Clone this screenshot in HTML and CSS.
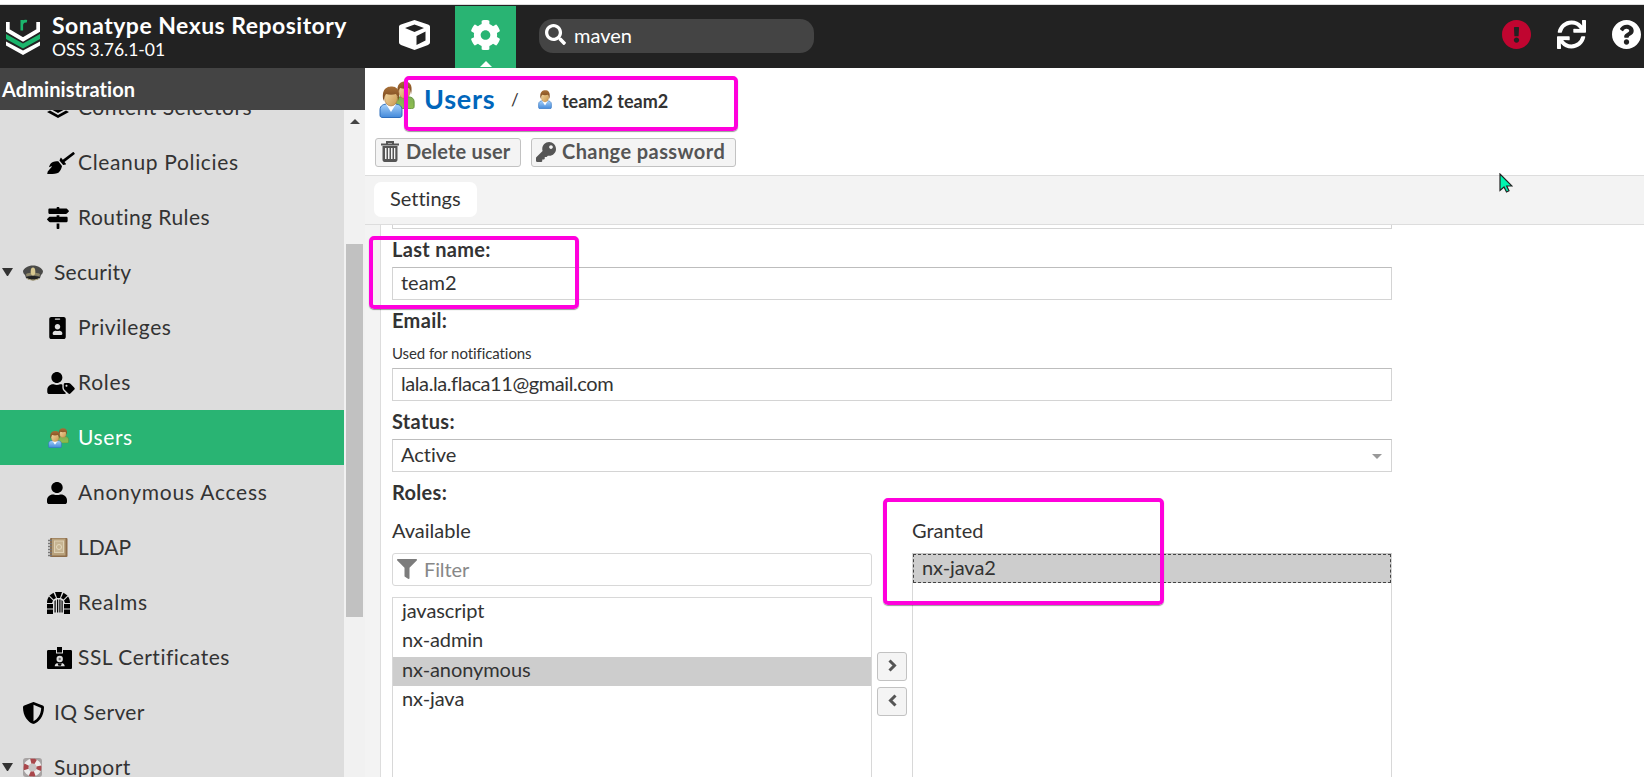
FILE: index.html
```
<!DOCTYPE html>
<html lang="en">
<head>
<meta charset="utf-8">
<title>Sonatype Nexus Repository</title>
<link rel="stylesheet" href="styles.css">
</head>
<body>
<svg class="defs" aria-hidden="true">
  <defs>
    <linearGradient id="blue" x1="0" y1="0" x2="0" y2="1"><stop offset="0" stop-color="#a8d2fa"/><stop offset="1" stop-color="#4389da"/></linearGradient>
    <linearGradient id="green" x1="0" y1="0" x2="0" y2="1"><stop offset="0" stop-color="#7fae55"/><stop offset="1" stop-color="#8fc04f"/></linearGradient>
    <linearGradient id="skin" x1="0" y1="0" x2="1" y2="1"><stop offset="0" stop-color="#f5dba8"/><stop offset="1" stop-color="#c9964c"/></linearGradient>
    <linearGradient id="hair" x1="0" y1="0" x2="0" y2="1"><stop offset="0" stop-color="#a87038"/><stop offset="1" stop-color="#74431a"/></linearGradient>
    <symbol id="person-blue" viewBox="0 0 24 32">
      <path d="M1 29v-5c0-5 4-6 8-6h6c4 0 8 1 8 6v5c0 2-1 2.500-3 2.500H4c-2 0-3-.5-3-2.500z" fill="url(#blue)" stroke="#2f6fbd"/>
      <path d="M7 18l5 8 5-8z" fill="#fff"/>
      <ellipse cx="12" cy="12" rx="6.500" ry="8" fill="url(#skin)" stroke="#a8743a" stroke-width=".6"/>
      <path d="M4.500 15C2 3 8 .5 12.500.5S22 3 19.500 15c-.5-3-1-5.500-2.500-7-3 1-7 1-10 0-1.500 2-2 4-2.500 7z" fill="url(#hair)"/>
    </symbol>
    <symbol id="person-green" viewBox="0 0 24 32">
      <path d="M1 29v-5c0-5 4-6 8-6h6c4 0 8 1 8 6v5c0 2-1 2.500-3 2.500H4c-2 0-3-.5-3-2.500z" fill="url(#green)" stroke="#5d8a38"/>
      <ellipse cx="12" cy="12" rx="6.500" ry="8" fill="url(#skin)" stroke="#a8743a" stroke-width=".6"/>
      <path d="M4.500 15C2 3 8 .5 12.500.5S22 3 19.500 15c-.5-3-1-5.500-2.500-7-3 1-7 1-10 0-1.500 2-2 4-2.500 7z" fill="url(#hair)"/>
    </symbol>
    <symbol id="people" viewBox="0 0 36 37">
      <use href="#person-green" x="15" y="0" width="21" height="28"/>
      <use href="#person-blue" x="0" y="5" width="24" height="32"/>
    </symbol>
  </defs>
</svg>

<header class="header">
  <svg class="logo" viewBox="0 0 34 36">
    <path d="M1.800 3v8.500L17 20.500l15.200-9V3" fill="none" stroke="#fff" stroke-width="3.800"/>
    <path d="M0 15l17 9.500L34 15v5L17 29.500 0 20z" fill="#1bb56c"/>
    <path d="M0 22.500l17 9 17-9v4L17 36 0 26.500z" fill="#fff"/>
    <path d="M15.800 11.500V1M15.800 5.500C16.300 3 18 1.700 21 2.200" fill="none" stroke="#1bb56c" stroke-width="2.600"/>
  </svg>
  <div class="brand">
    <div class="brand-name"><span>Sonatype Nexus Repository</span></div>
    <div class="brand-version"><span>OSS 3.76.1-01</span></div>
  </div>
  <div class="mode">
    <svg class="cube" viewBox="0 0 31 30"><path d="M15.500 0L29 4.500c1.500.5 2 1 2 2.500v15c0 1.500-.5 2-2 3L15.500 30 2 25c-1.500-1-2-1.500-2-3V7c0-1.500.5-2 2-2.500zM6 8l9.500 4L25 8l-9.500-3.500zM17.500 16v9l9-4.500v-9z" fill="#fff" fill-rule="evenodd"/></svg>
  </div>
  <div class="mode active">
    <svg class="gear" viewBox="16 8 480 496"><path fill="#fff" fill-rule="evenodd" d="M487.400 315.700l-42.600-24.600c4.300-23.200 4.300-47 0-70.200l42.600-24.600c4.900-2.800 7.100-8.600 5.500-14-11.100-35.600-30-67.800-54.700-94.600-3.800-4.100-10-5.100-14.800-2.300L380.800 110c-17.900-15.400-38.500-27.300-60.800-35.100V25.800c0-5.600-3.900-10.500-9.400-11.700-36.700-8.200-74.300-7.800-109.200 0-5.500 1.200-9.400 6.100-9.400 11.700V75c-22.200 7.900-42.800 19.800-60.800 35.100L88.700 85.500c-4.900-2.800-11-1.900-14.800 2.300-24.700 26.700-43.600 58.900-54.700 94.600-1.700 5.400.6 11.200 5.500 14L67.300 221c-4.300 23.200-4.300 47 0 70.200l-42.600 24.600c-4.900 2.800-7.100 8.600-5.500 14 11.100 35.600 30 67.800 54.700 94.600 3.800 4.100 10 5.100 14.800 2.300l42.600-24.600c17.900 15.400 38.500 27.300 60.800 35.100v49.200c0 5.600 3.900 10.500 9.400 11.700 36.700 8.200 74.300 7.800 109.200 0 5.500-1.200 9.400-6.100 9.400-11.700v-49.200c22.200-7.900 42.800-19.800 60.800-35.100l42.600 24.600c4.900 2.800 11 1.900 14.800-2.300 24.700-26.700 43.600-58.900 54.700-94.600 1.500-5.500-.7-11.300-5.600-14.100zM256 336c-44.100 0-80-35.900-80-80s35.900-80 80-80 80 35.900 80 80-35.900 80-80 80z"/></svg>
    <i class="notch"></i>
  </div>
  <div class="search">
    <svg viewBox="0 0 512 512"><path fill="#fff" fill-rule="evenodd" d="M505 442.700L405.300 343c-4.500-4.500-10.600-7-17-7H372c27.600-35.300 44-79.700 44-128C416 93.100 322.900 0 208 0S0 93.100 0 208s93.100 208 208 208c48.300 0 92.700-16.400 128-44v16.300c0 6.400 2.500 12.500 7 17l99.700 99.700c9.400 9.400 24.600 9.400 33.900 0l28.300-28.300c9.400-9.400 9.400-24.600.1-34zM208 336c-70.700 0-128-57.200-128-128 0-70.700 57.200-128 128-128 70.700 0 128 57.200 128 128 0 70.700-57.200 128-128 128z"/></svg>
    <span>maven</span>
  </div>
  <div class="actions">
    <svg viewBox="8 8 496 496"><path fill="#c00530" fill-rule="evenodd" d="M504 256c0 136.997-111.043 248-248 248S8 392.997 8 256C8 119.083 119.043 8 256 8s248 111.083 248 248zm-248 50c-25.405 0-46 20.595-46 46s20.595 46 46 46 46-20.595 46-46-20.595-46-46-46zm-43.673-165.346l7.418 136c.347 6.364 5.609 11.346 11.982 11.346h48.546c6.373 0 11.635-4.982 11.982-11.346l7.418-136c.375-6.874-5.098-12.654-11.982-12.654h-63.383c-6.884 0-12.356 5.780-11.981 12.654z"/></svg>
    <svg viewBox="0 0 512 512"><path fill="#fff" d="M440.650 12.570l4 82.770A247.160 247.160 0 0 0 255.830 8C134.730 8 33.910 94.920 12.290 209.820A12 12 0 0 0 24.090 224h49.050a12 12 0 0 0 11.670-9.260 175.910 175.910 0 0 1 317-56.940l-101.460-4.860a12 12 0 0 0-12.570 12v47.410a12 12 0 0 0 12 12H500a12 12 0 0 0 12-12V12a12 12 0 0 0-12-12h-47.370a12 12 0 0 0-11.980 12.570zM255.830 432a175.610 175.610 0 0 1-146-77.800l101.800 4.870a12 12 0 0 0 12.570-12v-47.400a12 12 0 0 0-12-12H12a12 12 0 0 0-12 12V500a12 12 0 0 0 12 12h47.350a12 12 0 0 0 12-12.600l-4.150-82.570A247.170 247.170 0 0 0 255.830 504c121.110 0 221.930-86.920 243.550-201.820a12 12 0 0 0-11.800-14.180h-49.050a12 12 0 0 0-11.670 9.260A175.860 175.860 0 0 1 255.830 432z"/></svg>
    <svg viewBox="8 8 496 496"><path fill="#fff" fill-rule="evenodd" d="M504 256c0 136.997-111.043 248-248 248S8 392.997 8 256C8 119.083 119.043 8 256 8s248 111.083 248 248zM262.655 90c-54.497 0-89.255 22.957-116.549 63.758-3.536 5.286-2.353 12.415 2.715 16.258l34.699 26.310c5.205 3.947 12.621 3.008 16.665-2.122 17.864-22.658 30.113-35.797 57.303-35.797 20.429 0 45.698 13.148 45.698 32.958 0 14.976-12.363 22.667-32.534 33.976C247.128 238.528 216 254.941 216 296v4c0 6.627 5.373 12 12 12h56c6.627 0 12-5.373 12-12v-1.333c0-28.462 83.186-29.647 83.186-106.667 0-58.002-60.165-102-116.531-102zM256 338c-25.365 0-46 20.635-46 46 0 25.364 20.635 46 46 46s46-20.636 46-46c0-25.365-20.635-46-46-46z"/></svg>
  </div>
</header>

<div class="layout">
  <aside class="side">
    <div class="side-title"><span>Administration</span></div>
    <div class="side-body">
      <nav class="tree">
        <div class="row sub"><div class="ico"><svg width="22" height="22" viewBox="0 0 22 22"><path d="M0 3l11-3 11 3-11 6zM0 10l3-1.500 8 4.500 8-4.500 3 1.500-11 6zM0 15l3-1.500 8 4.500 8-4.500 3 1.500-11 6z"/></svg></div><span class="t-content">Content Selectors</span></div>
        <div class="row sub"><div class="ico"><svg width="28" height="22" viewBox="0 0 640 512"><path d="M256.470 216.770l86.730 109.180s-16.600 102.360-76.570 150.120C206.660 523.850 0 510.190 0 510.190s3.800-23.140 11-55.430l94.620-112.170c3.970-4.700-.87-11.620-6.650-9.500l-60.400 22.090c14.440-41.660 32.720-80.040 54.600-97.470 59.970-47.760 163.300-40.940 163.300-40.940zM636.530 31.030l-19.860-25c-5.490-6.900-15.520-8.050-22.410-2.560l-232.480 177.800-34.140-42.970c-5.090-6.410-15.140-5.210-18.590 2.210l-25.330 54.550 86.730 109.180 58.800-12.450c8-1.690 11.420-11.200 6.340-17.600l-34.090-42.920 232.480-177.800c6.890-5.480 8.040-15.530 2.550-22.440z"/></svg></div><span class="t-cleanup">Cleanup Policies</span></div>
        <div class="row sub"><div class="ico"><svg width="22" height="22" viewBox="0 0 512 512"><path d="M507.310 84.690L464 41.370c-6-6-14.140-9.370-22.630-9.370H288V16c0-8.840-7.160-16-16-16h-32c-8.840 0-16 7.160-16 16v16H56c-13.250 0-24 10.750-24 24v80c0 13.250 10.750 24 24 24h385.370c8.490 0 16.620-3.370 22.630-9.370l43.310-43.310c6.250-6.260 6.250-16.380 0-22.630zM224 496c0 8.840 7.160 16 16 16h32c8.840 0 16-7.160 16-16V384h-64v112zm232-272H288v-32h-64v32H70.630c-8.490 0-16.620 3.370-22.630 9.370L4.690 276.690c-6.250 6.250-6.250 16.380 0 22.630L48 342.630c6 6 14.140 9.370 22.630 9.370H456c13.250 0 24-10.750 24-24v-80c0-13.250-10.750-24-24-24z"/></svg></div><span class="t-routing">Routing Rules</span></div>
        <div class="row top"><i class="caret"></i><div class="ico"><svg width="20" height="16" viewBox="0 0 20 16"><path d="M0 6c1-3 5-5.500 10-5.500S19 3 20 6c0 2-1 3-2 4l-1 3c-4 3-10 3-14 0l-1-3C1 9 0 8 0 6z" fill="#4a4a48"/><path d="M3 9c4-2 10-2 14 0l-.5 2.500c-4-1.500-9-1.500-13 0z" fill="#8d8668"/><path d="M3 12.500c4-2 10-2 14 0-4 3.500-10 3.500-14 0z" fill="#222"/><path d="M4 13.500c4 2 8 2 12 0" fill="none" stroke="#b9ae84"/><ellipse cx="10" cy="6.500" rx="2.300" ry="4" fill="#d8c88f"/></svg></div><span class="t-security">Security</span></div>
        <div class="row sub"><div class="ico"><svg class="nudge" width="17" height="22" viewBox="0 0 384 512"><path fill-rule="evenodd" d="M336 0H48C21.500 0 0 21.500 0 48v416c0 26.500 21.500 48 48 48h288c26.500 0 48-21.500 48-48V48c0-26.500-21.500-48-48-48zM144 32h96c8.800 0 16 7.200 16 16s-7.200 16-16 16h-96c-8.800 0-16-7.200-16-16s7.200-16 16-16zm48 128c35.300 0 64 28.700 64 64s-28.700 64-64 64-64-28.700-64-64 28.700-64 64-64zm112 236.800c0 10.600-10 19.200-22.400 19.200H102.400C90 416 80 407.400 80 396.800v-19.200c0-31.800 30.100-57.600 67.200-57.600h5c12.300 5.100 25.700 8 39.800 8s27.600-2.900 39.800-8h5c37.100 0 67.200 25.800 67.200 57.600v19.200z"/></svg></div><span class="t-priv">Privileges</span></div>
        <div class="row sub"><div class="ico"><svg width="28" height="22" viewBox="0 0 640 512"><path fill-rule="evenodd" d="M630.600 364.900l-90.300-90.200c-12-12-28.300-18.700-45.300-18.700h-79.300c-17.700 0-32 14.300-32 32v79.200c0 17 6.700 33.200 18.700 45.200l90.300 90.200c12.500 12.500 32.800 12.500 45.300 0l92.500-92.500c12.600-12.500 12.600-32.700.1-45.200zm-182.800-21c-13.300 0-24-10.700-24-24s10.700-24 24-24 24 10.700 24 24c0 13.200-10.700 24-24 24zm-223.800-88c70.700 0 128-57.300 128-128C352 57.300 294.700 0 224 0S96 57.300 96 128c0 70.600 57.300 127.900 128 127.900zm127.800 111.200V294c-12.200-3.600-24.900-6.200-38.200-6.200h-16.700c-22.200 10.200-46.900 16-72.900 16s-50.600-5.800-72.900-16h-16.700C60.200 287.900 0 348.100 0 422.300v41.600c0 26.500 21.500 48 48 48h352c15.500 0 29.100-7.500 37.900-18.900l-58-58c-18.100-18.100-28.100-42.200-28.100-67.900z"/></svg></div><span class="t-roles">Roles</span></div>
        <div class="row sub selected"><div class="ico"><svg class="small-people" width="21" height="20" viewBox="0 0 36 37" preserveAspectRatio="none"><use href="#people" width="36" height="37"/></svg></div><span class="t-users">Users</span></div>
        <div class="row sub"><div class="ico"><svg width="20" height="22" viewBox="0 0 448 512" preserveAspectRatio="none"><path d="M224 256c70.700 0 128-57.300 128-128S294.700 0 224 0 96 57.300 96 128s57.300 128 128 128zm89.600 32h-16.700c-22.200 10.200-46.900 16-72.900 16s-50.600-5.800-72.900-16h-16.700C60.200 288 0 348.200 0 422.400V464c0 26.500 21.500 48 48 48h352c26.500 0 48-21.500 48-48v-41.600c0-74.200-60.200-134.400-134.400-134.400z"/></svg></div><span class="t-anon">Anonymous Access</span></div>
        <div class="row sub"><div class="ico"><svg width="21" height="21" viewBox="0 0 21 21"><rect x="3" y="1" width="17.500" height="19" rx="1" fill="#8d6d4a"/><rect x="5" y="1.500" width="13.500" height="17" fill="#b9a27c"/><rect x="7.500" y="4" width="9" height="11.500" fill="#c6b492" stroke="#ddd0b4"/><circle cx="12" cy="10" r="2.500" fill="none" stroke="#e5dabf"/><path d="M1 3.500h4M1 6.500h4M1 9.500h4M1 12.500h4M1 15.500h4M1 18.500h4" stroke="#777" stroke-width="1.300"/></svg></div><span>LDAP</span></div>
        <div class="row sub"><div class="ico"><svg width="23" height="22" viewBox="0 0 23 22"><path d="M8 0h7l-2 6h-3zM6.500.8L9 6 6.500 7.500 2.500 3.500zM16.500.8L14 6l2.500 1.500 4-4zM2 4.500l4 4L5 11H0c0-3 .8-5 2-6.500zM21 4.500l-4 4 1 2.500h5c0-3-.8-5-2-6.500zM0 12h6v4.500H0zM17 12h6v4.500h-6zM0 17.500h6V22H0zM17 17.500h6V22h-6zM7.500 9l1.200-1v12.500H7.500zM10 7.500h1.200v13H10zM12.300 7.500h1.200v13h-1.200zM14.500 8l1.200 1v11.500h-1.200z"/></svg></div><span class="t-realms">Realms</span></div>
        <div class="row sub"><div class="ico"><svg width="25" height="22" viewBox="0 0 25 22"><path d="M1.500 3H9v3.500h7V3h7.500C24.500 3 25 3.500 25 4.500v16c0 1-.5 1.500-1.500 1.500h-22C.5 22 0 21.500 0 20.500v-16C0 3.500.5 3 1.500 3z"/><path d="M10 0h5v5.500h-5z"/><circle cx="12.700" cy="12" r="3.200" fill="#ddd"/><path d="M7.700 19.300c0-2 1.300-3 3.500-3.300h3c2.200.3 3.500 1.300 3.500 3.300z" fill="#ddd"/><path d="M10.500 16.200l1 2.600h2.400l1-2.600z"/><circle cx="12.700" cy="12" r="1.200" fill="#777"/></svg></div><span class="t-ssl">SSL Certificates</span></div>
        <div class="row top"><i class="caret none"></i><div class="ico"><svg width="21" height="22" viewBox="16 0 480 512" preserveAspectRatio="none"><path fill-rule="evenodd" d="M466.500 83.700l-192-80a48.150 48.150 0 0 0-36.900 0l-192 80C27.700 91.100 16 108.600 16 128c0 198.500 114.500 335.700 221.500 380.300 11.800 4.900 25.100 4.900 36.900 0C360.100 472.600 496 349.300 496 128c0-19.400-11.700-36.900-29.500-44.300zM256.100 446.300l-.1-381 175.900 73.300c-3.300 151.400-82.100 261.100-175.800 307.700z"/></svg></div><span class="t-iq">IQ Server</span></div>
        <div class="row top"><i class="caret"></i><div class="ico"><svg width="19" height="19" viewBox="0 0 19 19"><rect width="19" height="19" rx="3" fill="#a7a3a3"/><circle cx="9.500" cy="9.500" r="6.500" fill="#c8c4c4" stroke="#ececec" stroke-width="5"/><circle cx="9.500" cy="9.500" r="6.500" fill="none" stroke="#a9474b" stroke-width="5" stroke-dasharray="5.100 5.110" stroke-dashoffset="2.550"/></svg></div><span class="t-support">Support</span></div>
      </nav>
      <div class="scrollbar"><i class="scroll-up"></i><i class="scroll-thumb"></i></div>
    </div>
  </aside>

  <main class="main">
    <div class="crumbs">
      <svg class="people" viewBox="0 0 36 37"><use href="#people" width="36" height="37"/></svg>
      <span class="crumb-root">Users</span>
      <span class="crumb-sep">/</span>
      <svg class="person" viewBox="0 0 24 32" preserveAspectRatio="none"><use href="#person-blue" width="24" height="32"/></svg>
      <span class="crumb-leaf">team2 team2</span>
    </div>
    <div class="toolbar">
      <div class="btn delete"><svg width="18" height="21" viewBox="0 0 18 21"><path fill="none" stroke="#555" stroke-width="2" d="M0 3.500h18M6 2.800V1h6v1.800"/><path fill="#555" fill-rule="evenodd" d="M1.500 5h15v13.500c0 1.500-.8 2.500-2 2.500h-11c-1.200 0-2-1-2-2.500zM4 7v11h1.500V7zm3 0v11h1.500V7zm3 0v11h1.500V7zm3 0v11h1.300V7z"/></svg><span>Delete user</span></div>
      <div class="btn change"><svg width="20" height="20" viewBox="0 0 512 512"><path fill="#555" fill-rule="evenodd" d="M512 176.001C512 273.203 433.202 352 336 352c-11.220 0-22.190-1.062-32.827-3.069l-24.012 27.014A23.999 23.999 0 0 1 261.223 384H224v40c0 13.255-10.745 24-24 24h-40v40c0 13.255-10.745 24-24 24H24c-13.255 0-24-10.745-24-24v-78.059c0-6.365 2.529-12.470 7.029-16.971l161.802-161.802C163.108 213.814 160 195.271 160 176 160 78.798 238.797.001 335.999 0 433.488-.001 512 78.511 512 176.001zM336 128c0 26.510 21.490 48 48 48s48-21.490 48-48-21.490-48-48-48-48 21.490-48 48z"/></svg><span>Change password</span></div>
    </div>
    <div class="tabs"><div class="tab"><span>Settings</span></div></div>
    <div class="content">
      <div class="form">
        <div class="field cut"></div>
        <div class="label"><span>Last name:</span></div>
        <div class="field"><span>team2</span></div>
        <div class="label"><span>Email:</span></div>
        <div class="hint"><span>Used for notifications</span></div>
        <div class="field"><span class="mail">lala.la.flaca11@gmail.com</span></div>
        <div class="label"><span>Status:</span></div>
        <div class="field select"><span>Active</span><i class="down"></i></div>
        <div class="label"><span>Roles:</span></div>
        <div class="picker">
          <div class="column">
            <div class="caption"><span>Available</span></div>
            <div class="filter"><svg width="20" height="20" viewBox="0 0 512 512"><path fill="#7c7c7c" d="M487.976 0H24.028C2.710 0-8.047 25.866 7.058 40.971L192 225.941V432c0 7.831 3.821 15.170 10.237 19.662l80 55.980C298.020 518.690 320 507.493 320 487.980V225.941l184.947-184.970C520.021 25.896 509.338 0 487.976 0z"/></svg><span>Filter</span></div>
            <div class="list">
              <div class="item"><span>javascript</span></div>
              <div class="item"><span>nx-admin</span></div>
              <div class="item chosen"><span>nx-anonymous</span></div>
              <div class="item"><span>nx-java</span></div>
            </div>
          </div>
          <div class="movers">
            <div class="mover"><svg width="9" height="13" viewBox="0 0 9 13"><path d="M1.500 1.500l5 5-5 5" fill="none" stroke="#555" stroke-width="3"/></svg></div>
            <div class="mover"><svg width="9" height="13" viewBox="0 0 9 13"><path d="M7.500 1.500l-5 5 5 5" fill="none" stroke="#555" stroke-width="3"/></svg></div>
          </div>
          <div class="column">
            <div class="caption"><span>Granted</span></div>
            <div class="list granted"><div class="item focus"><span>nx-java2</span></div></div>
          </div>
        </div>
      </div>
    </div>
  </main>
</div>

<div class="mark mark-title"></div>
<div class="mark mark-name"></div>
<div class="mark mark-granted"></div>
<svg class="cursor" viewBox="0 0 14 20"><path d="M1 1v16.500l4-3.500 2.500 5 2.500-1.200-2.300-4.800H13z" fill="#00f5b0" stroke="#222" stroke-width="1.200"/></svg>
</body>
</html>
```
FILE: styles.css
```
* { box-sizing: border-box; }
html, body { height: 777px; overflow: hidden; }
body {
  margin: 0;
  position: relative;
  background: #fff;
  color: #333;
  font-family: Lato, "Open Sans", sans-serif;
  font-size: 20px;
  font-variant-ligatures: none;
  display: flex;
  flex-direction: column;
}
span { white-space: nowrap; }
svg { display: block; flex: none; }
.defs { position: absolute; width: 0; height: 0; }

.header {
  flex: none;
  height: 64px;
  margin-top: 4px;
  border-top: 1px solid #ddd;
  background: #222;
  color: #fff;
  display: flex;
  align-items: flex-start;
}
.logo { width: 34px; height: 36px; margin: 14px 0 0 6px; }
.brand { width: 334px; padding: 5px 0 0 12px; }
.brand-name { font-weight: 700; font-size: 23px; line-height: 30px; letter-spacing: .48px; }
.brand-version { font-size: 17.500px; line-height: 20px; }
.mode { width: 81px; height: 63px; }
.cube { width: 31px; height: 30px; margin: 15px 0 0 25px; }
.mode.active {
  width: 61px;
  height: 62px;
  margin-top: 1px;
  background: #29b473;
  display: flex;
  flex-direction: column;
  align-items: center;
}
.gear { width: 29px; height: 30px; margin-top: 14px; }
.notch {
  border: 6px solid transparent;
  border-top: 0;
  border-bottom-color: #fff;
  margin-top: 11px;
}
.search {
  width: 275px;
  height: 34px;
  margin: 14px 0 0 23px;
  border-radius: 14px;
  background: #444;
  display: flex;
  align-items: center;
  gap: 8px;
  padding-left: 6px;
}
.search svg { width: 21px; height: 21px; margin-bottom: 4px; }
.search span { line-height: 30px; margin-bottom: 3px; }
.actions { margin-left: auto; display: flex; gap: 26px; padding: 15px 3px 0 0; }
.actions svg { width: 29px; height: 29px; }

.layout { flex: 1; min-height: 0; display: flex; }
.side { width: 365px; flex: none; display: flex; flex-direction: column; }
.side-title {
  flex: none;
  height: 42px;
  background: #444;
  color: #fff;
  font-weight: 700;
  line-height: 42px;
  padding-left: 2px;
  letter-spacing: .08px;
}
.side-body { flex: 1; min-height: 0; display: flex; }
.tree {
  width: 344px;
  background: #ddd;
  overflow: hidden;
  display: flex;
  flex-direction: column;
}
.row { flex: none; height: 55px; display: flex; align-items: center; font-size: 21px; }
.row span { margin-bottom: 2px; }
.row:first-child { margin-top: -30px; }
.row.sub { padding-left: 47px; }
.row.sub .ico { width: 31px; }
.row.top .ico { width: 31px; }
.row.selected { background: #29b473; color: #fff; }
.t-content { letter-spacing: .55px; }
.t-cleanup { letter-spacing: .65px; }
.t-routing { letter-spacing: .45px; }
.t-security { letter-spacing: .28px; }
.t-priv { letter-spacing: .55px; }
.t-roles { letter-spacing: .7px; }
.t-users { letter-spacing: .6px; }
.t-anon { letter-spacing: .75px; }
.t-realms { letter-spacing: .75px; }
.t-ssl { letter-spacing: .5px; }
.t-iq { letter-spacing: .38px; }
.t-support { letter-spacing: .48px; }
.nudge { margin-left: 2px; }
.small-people { margin-left: 1px; }
.caret {
  width: 11px;
  border: 5.500px solid transparent;
  border-top: 8px solid #333;
  border-bottom: 0;
  margin: 0 10px 2px 2px;
}
.caret.none { visibility: hidden; }
.scrollbar { width: 21px; background: #f1f1f1; padding: 9px 2px 0; }
.scroll-up {
  display: block;
  width: 10px;
  margin-left: 4px;
  border: 5px solid transparent;
  border-top: 0;
  border-bottom-color: #444;
}
.scroll-thumb { display: block; height: 373px; margin-top: 120px; background: #c1c1c1; }

.main { flex: 1; min-width: 0; display: flex; flex-direction: column; }
.crumbs { height: 70px; display: flex; align-items: flex-start; flex: none; padding-left: 14px; }
.people { width: 36px; height: 37px; margin-top: 13px; }
.crumb-root {
  width: 87px;
  margin-left: 9px;
  color: #06b;
  font-weight: 700;
  font-size: 27px;
  line-height: 61px;
  letter-spacing: .75px;
}
.crumb-sep { width: 27px; font-size: 17px; line-height: 64px; }
.person { width: 14px; height: 19px; margin-top: 22px; }
.crumb-leaf { margin-left: 10px; font-weight: 700; font-size: 18px; line-height: 66px; }
.toolbar { flex: none; height: 37px; padding-left: 10px; display: flex; gap: 10px; }
.btn {
  height: 29px;
  border: 1px solid #c2c2c2;
  border-radius: 3px;
  background: #f4f4f4;
  color: #555;
  font-weight: 700;
  display: flex;
  align-items: center;
}
.btn span { line-height: 26px; margin-bottom: 4px; }
.btn svg { margin-bottom: 2px; }
.delete { width: 146px; padding-left: 5px; gap: 7px; letter-spacing: .18px; }
.change { width: 205px; padding-left: 4px; gap: 6px; letter-spacing: .42px; }
.tabs {
  flex: none;
  height: 50px;
  background: #f3f3f3;
  border-top: 1px solid #ddd;
  border-bottom: 1px solid #ddd;
  padding: 6px 0 0 9px;
}
.tab { width: 103px; height: 35px; border-radius: 7px; background: #fff; padding-left: 16px; line-height: 33px; }
.content { flex: 1; min-height: 0; background: #f3f3f3; padding-left: 15px; }
.form { height: 100%; background: #fff; border-left: 1px solid #ddd; padding-left: 11px; overflow: hidden; }
.field {
  width: 1000px;
  height: 33px;
  border: 1px solid #d4d4d4;
  border-top-color: #bdbdbd;
  padding-left: 8px;
  line-height: 29px;
}
.field.cut { height: 4px; border-top: 0; }
.label { height: 38px; line-height: 40px; font-weight: 700; letter-spacing: .32px; }
.hint { height: 30px; line-height: 31px; font-size: 15px; letter-spacing: -.08px; }
.mail { letter-spacing: -.42px; }
.select { display: flex; justify-content: space-between; }
.down {
  align-self: center;
  width: 10px;
  border: 5px solid transparent;
  border-top-color: #999;
  border-bottom: 0;
  margin: 1px 9px 0 0;
}
.picker { display: flex; }
.column { width: 480px; height: 300px; display: flex; flex-direction: column; flex: none; }
.caption { height: 43px; line-height: 40px; }
.filter {
  flex: none;
  height: 33px;
  border: 1px solid #d8d8d8;
  border-radius: 3px;
  display: flex;
  align-items: center;
  gap: 7px;
  padding-left: 4px;
  margin-bottom: 11px;
  color: #888;
}
.filter svg { margin-bottom: 2px; }
.filter span { margin-bottom: 2px; letter-spacing: -.1px; }
.list { flex: 1; border: 1px solid #d8d8d8; }
.item { height: 29.400px; line-height: 25px; padding-left: 9px; letter-spacing: -.08px; }
.chosen { background: #cdcdcd; }
.granted { border-top-color: #c6c6c6; }
.item.focus { height: 29px; background: #cdcdcd; border: 1px dashed #444; padding-left: 8px; line-height: 24px; }
.movers { width: 40px; flex: none; padding: 142px 0 0 5px; display: flex; flex-direction: column; gap: 6px; }
.mover {
  width: 30px;
  height: 29px;
  border: 1px solid #c2c2c2;
  border-radius: 3px;
  background: #f4f4f4;
  display: flex;
  align-items: center;
  justify-content: center;
}
.mover svg { margin-bottom: 2px; }

.mark {
  position: absolute;
  border: 4px solid #ff00dc;
  border-radius: 5px;
  box-shadow: 0 1px 1px rgba(0, 0, 0, .4);
}
.mark-title { left: 404px; top: 76px; width: 334px; height: 55px; }
.mark-name { left: 369px; top: 236px; width: 210px; height: 73px; }
.mark-granted { left: 883px; top: 498px; width: 281px; height: 107px; }
.cursor { position: absolute; left: 1499px; top: 173px; width: 14px; height: 20px; }
```
